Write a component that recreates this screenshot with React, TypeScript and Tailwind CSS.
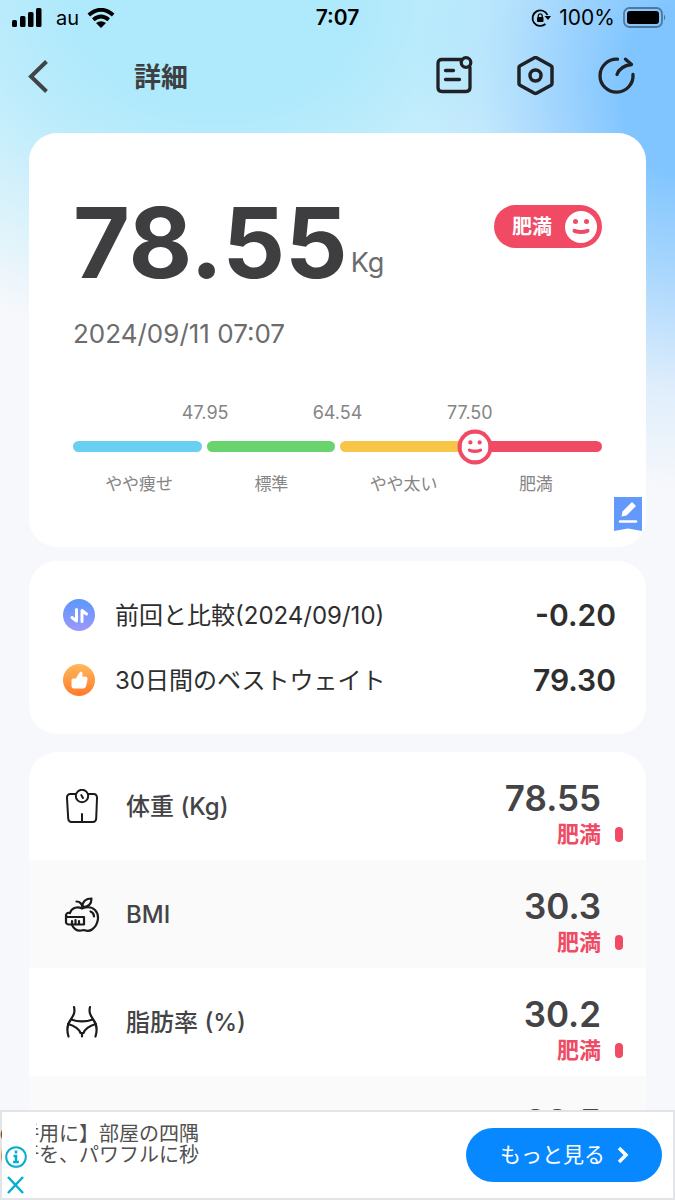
const ranges = [
  { label: 'やや痩せ', color: 'bg-[#69d0f2]' },
  { label: '標準', color: 'bg-[#69d36d]' },
  { label: 'やや太い', color: 'bg-[#f7c548]' },
  { label: '肥満', color: 'bg-[#f04a64]' },
];

const limits = ['47.95', '64.54', '77.50'];

const metrics = [
  { name: '体重 (Kg)', value: '78.55', status: '肥満', icon: <ScaleIcon /> },
  { name: 'BMI', value: '30.3', status: '肥満', icon: <AppleIcon /> },
  { name: '脂肪率 (%)', value: '30.2', status: '肥満', icon: <WaistIcon /> },
  { name: '', value: '22.5', status: '', icon: null },
];

function ScaleIcon() {
  return (
    <svg viewBox="0 0 36 36" className="size-9" fill="none" stroke="#1b1b1b" strokeWidth="2" strokeLinecap="round" strokeLinejoin="round">
      <path d="M12 5H6.500C4 5 2.800 6.500 3 9L4.200 29.500C4.400 32 5.500 33 7.600 33H28.800C31 33 32 32 32.200 29.500L33 9C33.100 6.500 32 5 29.500 5H24" />
      <circle cx="18" cy="7" r="6.200" />
      <path d="M17.300 6L19 9M18 25V32" />
    </svg>
  );
}

function AppleIcon() {
  return (
    <svg viewBox="0 0 36 36" className="size-9" fill="none" stroke="#1b1b1b" strokeWidth="2.200" strokeLinecap="round" strokeLinejoin="round">
      <path d="M6 16C8 10 14 9.500 18 11.500C22 10 27 9 31 13C36 18 34.500 28 28 32.500C24.500 35 21.500 33.500 19.500 33C15 34.500 11 34 8 28" />
      <path d="M6 16C3 15 1.500 17.500 2 19.500V25.500C2.500 27 3.500 27.500 5 27.500H20V20H4C2.500 20 2 19 2 18M8 24V27M11.500 23V27M15 24V27" />
      <path d="M18.500 11C18 7 16.500 4.500 12.500 4.500M18.500 10C18.500 4 22 1.500 27.500 1.500C27.500 7 24.500 10 18.500 10ZM26.500 14.500C29 15.500 30 17.500 30 19.500" />
    </svg>
  );
}

function WaistIcon() {
  return (
    <svg viewBox="0 0 36 36" className="size-9" fill="none" stroke="#1b1b1b" strokeWidth="2.200" strokeLinecap="round" strokeLinejoin="round">
      <path d="M10 2C11.500 8 9 11 6.500 15C2.800 20 2.500 25 4.500 31.500M26 2C24.500 8 27 11 29.500 15C33.200 20 33.500 25 31.500 31.500" />
      <path d="M7 14.500C14 17 22 17 29 14.500M4 19C11 21 15 24 16.500 28H19.500C21 24 25 21 32 19M18 28V31.500" />
    </svg>
  );
}

function Face({ className }: { className: string }) {
  return (
    <svg viewBox="0 0 32 32" className={className} fill="none" stroke="#f04a64" strokeLinecap="round">
      <circle cx="16" cy="16" r="16" fill="#fff" stroke="none" />
      <path d="M10.500 10.500V10.600M21.500 10.500V10.600" strokeWidth="5" />
      <path d="M9.500 19.800Q16 22.300 22.500 19.800" strokeWidth="4" />
    </svg>
  );
}

function StatusBar() {
  return (
    <div className="grid h-9 grid-cols-3 items-center px-3 text-[21px] leading-9 text-black">
      <div className="flex items-center gap-2">
        <svg viewBox="0 0 32 20" className="h-5 w-8">
          <rect x="0" y="12" width="5" height="7" rx="1.500" />
          <rect x="8" y="8" width="5.500" height="11" rx="1.500" />
          <rect x="16" y="4" width="5.500" height="15" rx="1.500" />
          <rect x="24" y="0" width="5.500" height="19" rx="1.500" />
        </svg>
        <span className="ml-1 text-xl leading-9">au</span>
        <svg viewBox="0 0 28 20" className="h-5 w-7" fill="none" stroke="#000" strokeWidth="3.800">
          <path d="M1.800 7Q14 -3.500 26.200 7M6.300 11.800Q14 5.300 21.700 11.800" />
          <path d="M9 15Q14 11.500 19 15L14 20Z" fill="#000" stroke="none" />
        </svg>
      </div>
      <span className="text-center font-semibold">7:07</span>
      <div className="flex items-center justify-end gap-2">
        <svg viewBox="0 0 20 20" className="size-5" fill="none" stroke="#000" strokeWidth="1.800">
          <path d="M14.500 16A7.800 7.800 0 1 1 16.500 7" />
          <path d="M13.500 8H20L17 12Z" fill="#000" stroke="none" />
          <rect x="6" y="9" width="6.500" height="5" rx="1" fill="#000" stroke="none" />
          <path d="M7.300 9V7.500A2 2 0 0 1 11.200 7.500V9" strokeWidth="1.300" />
        </svg>
        <span>100%</span>
        <svg viewBox="0 0 44 22" className="-mr-1 h-6 w-11">
          <rect x="1" y="1" width="38" height="19" rx="5.500" fill="none" stroke="#000" strokeOpacity=".4" strokeWidth="1.800" />
          <rect x="4" y="4" width="32" height="13" rx="3" />
          <path d="M41 7.500Q43.500 10.500 41 13.500Z" opacity=".4" />
        </svg>
      </div>
    </div>
  );
}

function TopBar() {
  return (
    <header className="flex h-20 items-center pr-[38px] pl-6">
      <button type="button" aria-label="戻る" className="w-[110px]">
        <svg viewBox="0 0 32 36" className="h-9 w-8" fill="none" stroke="#414446" strokeWidth="4">
          <path d="M22.500 3.500L7 18.500L22.500 33.500" />
        </svg>
      </button>
      <h1 className="pt-1 text-[27px] font-bold text-[#3d4042]">詳細</h1>
      <div className="ml-auto flex gap-10">
        <button type="button" aria-label="レポート">
          <svg viewBox="0 0 41 41" className="size-[41px]" fill="none" stroke="#202124" strokeWidth="3.300" strokeLinecap="round" strokeLinejoin="round">
            <path d="M27 3.500H8Q4 3.500 4 7.500V31.500Q4 35.500 8 35.500H32Q36 35.500 36 31.500V11.500" />
            <circle cx="32" cy="6.500" r="4.800" />
            <path d="M11.500 14.500H19.500M11.500 23.500H25.500" />
          </svg>
        </button>
        <button type="button" aria-label="設定">
          <svg viewBox="0 0 41 41" className="size-[41px]" fill="none" stroke="#202124" strokeWidth="3.500" strokeLinejoin="round">
            <path d="M19.500 1.800Q20.500 1.300 21.500 1.800L36 9.800Q37 10.300 37 11.500V27.500Q37 28.700 36 29.200L21.500 37.200Q20.500 37.700 19.500 37.200L5 29.200Q4 28.700 4 27.500V11.500Q4 10.300 5 9.800Z" />
            <circle cx="20.500" cy="19.500" r="5.500" />
          </svg>
        </button>
        <button type="button" aria-label="共有">
          <svg viewBox="0 0 41 41" className="size-[41px]" fill="none" stroke="#202124" strokeWidth="3.300" strokeLinecap="round" strokeLinejoin="round">
            <path d="M21.500 3.200A16.500 16.500 0 1 0 37 18.500" />
            <path d="M21 18.500Q24 10 35.500 8.500M29.500 3.200L35.500 8.500" />
          </svg>
        </button>
      </div>
    </header>
  );
}

function WeightCard() {
  return (
    <section className="relative h-[414px] overflow-hidden rounded-[28px] bg-white px-11 pt-14">
      <div className="flex items-start justify-between">
        <div className="flex h-[108px] items-end gap-[3px]">
          <span className="text-[98px] leading-[108px] font-bold text-[#3e3e40]">78.55</span>
          <span className="pb-[18px] text-[27px] leading-8 text-[#6c6c6e]">Kg</span>
        </div>
        <div className="mt-4 flex h-[43px] items-center gap-[13px] rounded-full bg-[#f04a64] pr-[5px] pl-[18px] text-xl font-semibold text-white">
          肥満
          <Face className="size-8" />
        </div>
      </div>
      <p className="mt-[21px] text-[26px] leading-8 text-[#6c6c6e]">2024/09/11 07:07</p>

      <div className="mt-12 flex px-[66px] text-lg leading-[30px] text-[#858585]">
        {limits.map((limit) => (
          <span key={limit} className="flex-1 text-center">{limit}</span>
        ))}
      </div>
      <div className="relative mt-[13px] flex gap-[5px]">
        {ranges.map((range) => (
          <div key={range.label} className={`h-[11px] flex-1 rounded-full ${range.color}`} />
        ))}
        <div className="absolute top-1/2 left-[76%] -translate-x-1/2 -translate-y-1/2 rounded-full bg-[#f04a64] p-1">
          <Face className="size-[27px]" />
        </div>
      </div>
      <div className="mt-[18px] flex text-[17px] leading-7 text-[#858585]">
        {ranges.map((range) => (
          <span key={range.label} className="flex-1 text-center">{range.label}</span>
        ))}
      </div>
      <button type="button" aria-label="メモを編集" className="absolute right-1 bottom-4">
        <svg viewBox="0 0 28 34" className="h-[34px] w-7">
          <path d="M0 0H28V34L14 31.500L0 34Z" fill="#6399fb" />
          <path d="M7.500 19.500L8.500 14.500L18 5L22 9L12.500 18.500Z" fill="#fff" />
          <path d="M6 24.500H22" stroke="#fff" strokeWidth="2.500" strokeLinecap="round" />
        </svg>
      </button>
    </section>
  );
}

function CompareCard() {
  return (
    <section className="mt-[14px] rounded-[28px] bg-white pt-[21px] pr-[30px] pb-[22px] pl-[34px] text-[#2e2e2e]">
      <div className="flex h-[65px] items-center gap-5">
        <svg viewBox="0 0 32 32" className="size-8">
          <defs>
            <linearGradient id="compare" x1="0" y1="0" x2="0" y2="1">
              <stop stopColor="#5b97fb" />
              <stop offset="1" stopColor="#9c98fc" />
            </linearGradient>
          </defs>
          <circle cx="16" cy="16" r="16" fill="url(#compare)" />
          <path d="M13.500 10.500V22L9 18.500M19 22.500V11.500L23.500 15" fill="none" stroke="#fff" strokeWidth="3" strokeLinecap="round" strokeLinejoin="round" />
        </svg>
        <span className="pt-0.5 text-2xl">前回と比較(2024/09/10)</span>
        <span className="ml-auto text-3xl font-semibold">-0.20</span>
      </div>
      <div className="flex h-[65px] items-center gap-5">
        <svg viewBox="0 0 32 32" className="size-8">
          <defs>
            <linearGradient id="best" x1="0" y1="0" x2="0" y2="1">
              <stop stopColor="#ffb95a" />
              <stop offset="1" stopColor="#ff7a2c" />
            </linearGradient>
          </defs>
          <circle cx="16" cy="16" r="16" fill="url(#best)" />
          <path d="M10 15H13L17 8.500Q18 7.500 19 8.500Q19.500 9.500 18.500 13H22.500Q24.500 13 24 15.500L22.500 22.500Q22 24 20.500 24H10.500Q9 24 9 22.500V16Q9 15 10 15Z" fill="#fff" stroke="#fff" strokeLinejoin="round" />
        </svg>
        <span className="pt-0.5 text-2xl">30日間のベストウェイト</span>
        <span className="ml-auto text-3xl font-semibold">79.30</span>
      </div>
    </section>
  );
}

function MetricList() {
  return (
    <section className="mt-[18px] overflow-hidden rounded-[28px] bg-white text-[#444446]">
      {metrics.map((metric) => (
        <div key={metric.value} className="flex h-[108px] items-center pt-0.5 pr-[23px] pl-[35px] even:bg-[#fafafa]">
          {metric.icon}
          <span className="ml-[26px] text-2xl font-medium">{metric.name}</span>
          <div className="ml-auto grid grid-cols-[auto_8px] items-center gap-x-[14px] pt-[14px] text-right">
            <span className="text-[35px] leading-10 font-semibold">{metric.value}</span>
            <span />
            <span className="h-8 text-[22px] leading-8 font-semibold text-[#f04a64]">{metric.status}</span>
            {metric.status && <span className="h-[15px] rounded-full bg-[#f04a64]" />}
          </div>
        </div>
      ))}
    </section>
  );
}

function AdBanner() {
  return (
    <aside className="relative flex h-[90px] shrink-0 items-center justify-between border-2 border-[#e2e4e7] bg-white pr-[11px]">
      <p className="-ml-[3px] self-start pt-3 text-xl leading-[21px] whitespace-pre text-[#505050]">
        の併用に】部屋の四隅
        <br />
        に汗を、パワフルに秒
      </p>
      <div className="absolute top-0 left-0 flex h-full w-[34px] flex-col justify-end gap-2 bg-white pb-1 pl-[3px]">
        <button type="button" aria-label="広告情報">
          <svg viewBox="0 0 22 22" className="size-[22px]" fill="none" stroke="#08add2" strokeWidth="2">
            <circle cx="11" cy="11" r="9.800" />
            <path d="M11 4.500V7.500M8.500 10H11V16M8 16H14" strokeWidth="2.500" />
          </svg>
        </button>
        <button type="button" aria-label="広告を閉じる">
          <svg viewBox="0 0 22 18" className="h-[18px] w-[22px]" fill="none" stroke="#08add2" strokeWidth="2.500">
            <path d="M3 1L18 17M18 1L3 17" />
          </svg>
        </button>
      </div>
      <a href="#more" className="flex h-[54px] items-center gap-3 rounded-full bg-[#0788ff] pr-[33px] pl-[34px] text-[21px] text-white">
        もっと見る
        <svg viewBox="0 0 12 18" className="h-[18px] w-3" fill="none" stroke="#fff" strokeWidth="3.500">
          <path d="M2 2L9 9L2 16" />
        </svg>
      </a>
    </aside>
  );
}

export default function App() {
  return (
    <div className="flex h-screen flex-col overflow-hidden bg-[#f7f8fb] font-['Inter','Noto_Sans_CJK_JP',sans-serif]">
      <main className="min-h-0 flex-1 overflow-hidden bg-[radial-gradient(ellipse_260px_400px_at_100%_90px,#80c5ff_20%,#80c5ffaa_45%,#80c5ff33_75%,transparent),radial-gradient(ellipse_460px_350px_at_32%_0,#aee9fc_30%,#aee9fccc_50%,#aee9fc66_75%,transparent)] bg-no-repeat">
        <StatusBar />
        <TopBar />
        <div className="mt-[17px] px-[29px]">
          <WeightCard />
          <CompareCard />
          <MetricList />
        </div>
      </main>
      <AdBanner />
    </div>
  );
}
